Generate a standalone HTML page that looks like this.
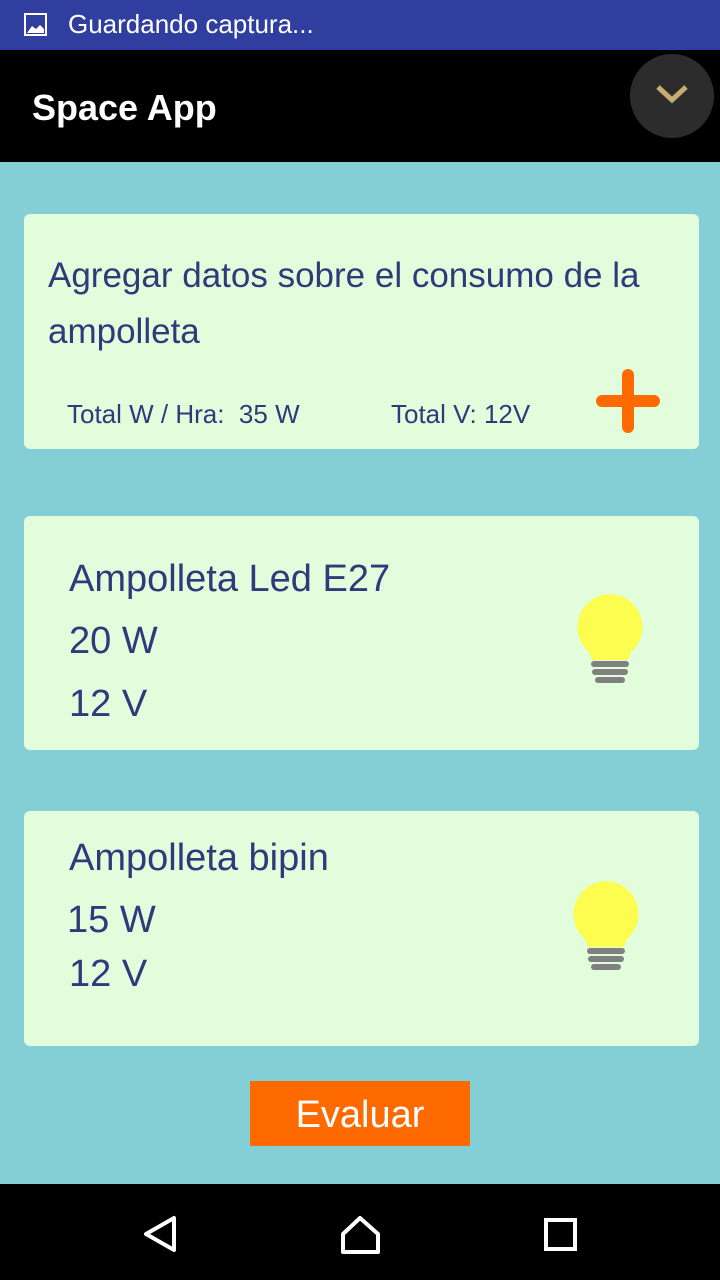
<!DOCTYPE html>
<html><head><meta charset="utf-8"><style>
body{margin:0;width:720px;height:1280px;position:relative;background:#83cfd5;font-family:"Comic Sans MS","Liberation Sans",sans-serif;overflow:hidden}
.status{position:absolute;left:0;top:0;width:720px;height:50px;background:#303f9f;color:#fff;font-family:"Liberation Sans",sans-serif;font-size:26px}
.bar{position:absolute;left:0;top:50px;width:720px;height:112px;background:#000;color:#fff;font-family:"Liberation Sans",sans-serif}
.card{position:absolute;left:24px;width:675px;background:#e2fddc;border-radius:6px;color:#2e3a7a}
.t{position:absolute;white-space:nowrap}
.nav{position:absolute;left:0;top:1184px;width:720px;height:96px;background:#000}
</style></head><body>
<div class="status">
<svg style="position:absolute;left:24px;top:13px" width="23" height="23" viewBox="0 0 23 23"><rect x="1" y="1" width="21" height="21" fill="none" stroke="#fff" stroke-width="2"/><path d="M3 20 L8 13 L12 16 L16 12 L20 16 L20 20Z" fill="#fff"/></svg>
<div class="t" style="left:68px;top:9px">Guardando captura...</div></div>
<div class="bar"><div class="t" style="left:32px;top:37px;font-size:36px;font-weight:bold">Space App</div>
<div style="position:absolute;left:630px;top:4px;width:84px;height:84px;border-radius:50%;background:#2c2c2c"></div>
<svg style="position:absolute;left:655px;top:33px" width="34" height="22"><path d="M3 4 L17 17 L31 4" fill="none" stroke="#c8ac70" stroke-width="5"/></svg></div>

<div class="card" style="top:214px;height:235px">
<div class="t" style="left:24px;top:42px;font-size:35px">Agregar datos sobre el consumo de la</div>
<div class="t" style="left:24px;top:98px;font-size:35px">ampolleta</div>
<div class="t" style="left:43px;top:185px;font-size:26px">Total W / Hra:&nbsp; 35 W</div>
<div class="t" style="left:367px;top:185px;font-size:26px">Total V: 12V</div>
<svg style="position:absolute;left:572px;top:155px" width="64" height="64"><path d="M32 6V58M6 32H58" stroke="#ff6a00" stroke-width="12" stroke-linecap="round"/></svg>
</div>

<div class="card" style="top:516px;height:234px">
<div class="t" style="left:45px;top:42px;font-size:38px">Ampolleta Led E27</div>
<div class="t" style="left:45px;top:104px;font-size:38px">20 W</div>
<div class="t" style="left:45px;top:167px;font-size:38px">12 V</div>
<svg style="position:absolute;left:553px;top:78px" width="66" height="92"><path d="M33 0A33 33 0 0 1 54 58L51 66H15L12 58A33 33 0 0 1 33 0Z" fill="#fdfd4f"/><g stroke="#808080" stroke-width="6" stroke-linecap="round"><line x1="17" y1="70" x2="49" y2="70"/><line x1="18" y1="78" x2="48" y2="78"/><line x1="21" y1="86" x2="45" y2="86"/></g></svg>
</div>

<div class="card" style="top:811px;height:235px">
<div class="t" style="left:45px;top:26px;font-size:38px">Ampolleta bipin</div>
<div class="t" style="left:43px;top:88px;font-size:38px">15 W</div>
<div class="t" style="left:45px;top:142px;font-size:38px">12 V</div>
<svg style="position:absolute;left:549px;top:70px" width="66" height="92"><path d="M33 0A33 33 0 0 1 54 58L51 66H15L12 58A33 33 0 0 1 33 0Z" fill="#fdfd4f"/><g stroke="#808080" stroke-width="6" stroke-linecap="round"><line x1="17" y1="70" x2="49" y2="70"/><line x1="18" y1="78" x2="48" y2="78"/><line x1="21" y1="86" x2="45" y2="86"/></g></svg>
</div>

<div style="position:absolute;left:250px;top:1081px;width:220px;height:65px;background:#ff6a00;color:#fff;font-size:38px;text-align:center;line-height:68px">Evaluar</div>

<div class="nav">
<svg style="position:absolute;left:140px;top:30px" width="40" height="40"><path d="M34 4V36L6 20Z" fill="none" stroke="#fff" stroke-width="4" stroke-linejoin="round"/></svg>
<svg style="position:absolute;left:340px;top:30px" width="42" height="40"><path d="M3 20L20 4L38 20V38H3Z" fill="none" stroke="#fff" stroke-width="4" stroke-linejoin="round"/></svg>
<svg style="position:absolute;left:544px;top:34px" width="34" height="34"><rect x="2" y="2" width="29" height="29" fill="none" stroke="#fff" stroke-width="4"/></svg>
</div>
</body></html>
